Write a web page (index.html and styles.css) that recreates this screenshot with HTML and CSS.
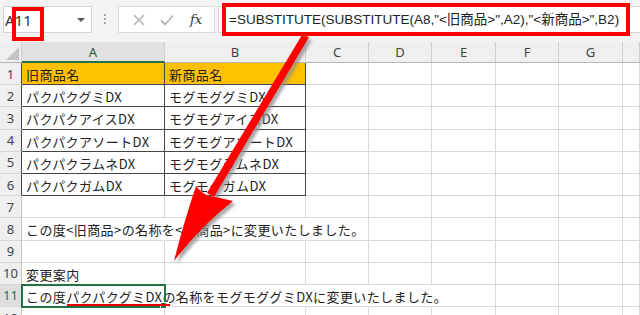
FILE: index.html
```html
<!DOCTYPE html>
<html>
  <head>
    <meta charset="UTF-8">
    <title>SUBSTITUTE</title>
    <link rel="stylesheet" href="styles.css">
  </head>
  <body>
    <div class="fbar">
      <div class="namebox"><span class="ref">A11</span><span class="dd"></span></div>
      <div class="grip"><i></i><i></i><i></i></div>
      <div class="fbtns">
        <svg width="12" height="12" viewBox="0 0 12 12"><path d="M1 1L11 11M11 1L1 11" stroke="#b4b4b4" stroke-width="1.6" fill="none"/></svg>
        <svg width="14" height="12" viewBox="0 0 14 12"><path d="M1 6.5L5 10.5L13 1.5" stroke="#b4b4b4" stroke-width="1.8" fill="none"/></svg>
        <span class="fx">fx</span>
      </div>
      <div class="finput">=SUBSTITUTE(SUBSTITUTE(A8,"&lt;旧商品&gt;",A2),"&lt;新商品&gt;",B2)</div>
    </div>

    <table class="sheet">
      <colgroup>
        <col style="width:22px"><col style="width:143px"><col style="width:141px">
        <col style="width:63px"><col style="width:63px"><col style="width:64px">
        <col style="width:63px"><col style="width:64px"><col>
      </colgroup>
      <tr class="hdr">
        <th class="corner"></th><th class="sel">A</th><th>B</th><th>C</th><th>D</th><th>E</th><th>F</th><th>G</th><th></th>
      </tr>
      <tr>
        <th class="rn dk">1</th><td class="d gold">旧商品名</td><td class="d gold">新商品名</td><td></td><td></td><td></td><td></td><td></td><td></td>
      </tr>
      <tr>
        <th class="rn dk">2</th><td class="d">パクパクグミDX</td><td class="d">モグモググミDX</td><td></td><td></td><td></td><td></td><td></td><td></td>
      </tr>
      <tr>
        <th class="rn dk">3</th><td class="d">パクパクアイスDX</td><td class="d">モグモグアイスDX</td><td></td><td></td><td></td><td></td><td></td><td></td>
      </tr>
      <tr>
        <th class="rn dk">4</th><td class="d">パクパクアソートDX</td><td class="d">モグモグアソートDX</td><td></td><td></td><td></td><td></td><td></td><td></td>
      </tr>
      <tr>
        <th class="rn dk">5</th><td class="d">パクパクラムネDX</td><td class="d">モグモグラムネDX</td><td></td><td></td><td></td><td></td><td></td><td></td>
      </tr>
      <tr>
        <th class="rn dk">6</th><td class="d">パクパクガムDX</td><td class="d">モグモグガムDX</td><td></td><td></td><td></td><td></td><td></td><td></td>
      </tr>
      <tr>
        <th class="rn">7</th><td></td><td></td><td></td><td></td><td></td><td></td><td></td><td></td>
      </tr>
      <tr>
        <th class="rn">8</th><td class="ov">この度&lt;旧商品&gt;の名称を&lt;新商品&gt;に変更いたしました。</td><td class="ov"></td><td></td><td></td><td></td><td></td><td></td><td></td>
      </tr>
      <tr>
        <th class="rn">9</th><td></td><td></td><td></td><td></td><td></td><td></td><td></td><td></td>
      </tr>
      <tr>
        <th class="rn">10</th><td>変更案内</td><td></td><td></td><td></td><td></td><td></td><td></td><td></td>
      </tr>
      <tr>
        <th class="rn sel">11</th><td class="active">この度<span class="mark">パクパクグミDX</span>の名称をモグモググミDXに変更いたしました。</td><td class="ov"></td><td class="ov"></td><td class="ov"></td><td></td><td></td><td></td><td></td>
      </tr>
      <tr>
        <th class="rn">12</th><td></td><td></td><td></td><td></td><td></td><td></td><td></td><td></td>
      </tr>
    </table>

    <div class="hl-name"></div>
    <div class="hl-formula"></div>

    <svg class="arrow" width="640" height="315" viewBox="0 0 640 315">
      <defs>
        <filter id="soft" x="-20%" y="-20%" width="140%" height="140%">
          <feGaussianBlur stdDeviation="1.5"/>
        </filter>
        <g id="arw">
          <path d="M302 35L309 37L214 197L207 193Z"/>
          <path d="M174 261Q183 225 196 186Q203 195 210 196Q221 198 233 201Q201 226 174 261Z"/>
        </g>
      </defs>
      <use href="#arw" x="3" y="3" fill="#8c8c8c" opacity="0.75" filter="url(#soft)"/>
      <use href="#arw" fill="#ff0000"/>
    </svg>
  </body>
</html>
```

FILE: styles.css
```css
html, body {
  margin: 0;
  padding: 0;
  width: 640px;
  height: 315px;
  overflow: hidden;
  background: #fff;
  font-family: "Noto Sans", "Noto Sans CJK JP", sans-serif;
}

/* formula bar */
.fbar {
  display: flex;
  align-items: flex-start;
  box-sizing: border-box;
  height: 42px;
  padding: 6px 0 0 3px;
  background: #f3f3f3;
}
.namebox {
  flex-shrink: 0;
  display: flex;
  align-items: center;
  justify-content: space-between;
  box-sizing: border-box;
  width: 89px;
  height: 27px;
  padding: 0 6px 0 0;
  background: #fff;
  border: 1px solid #d4d4d4;
  font-size: 15px;
  color: #333;
}
.namebox .ref { margin-left: 1px; }
.dd {
  width: 0;
  height: 0;
  border-left: 4px solid transparent;
  border-right: 4px solid transparent;
  border-top: 4px solid #555;
}
.grip {
  flex-shrink: 0;
  display: flex;
  flex-direction: column;
  gap: 2px;
  width: 26px;
  align-items: center;
  padding-top: 8px;
}
.grip i {
  display: block;
  width: 2px;
  height: 2px;
  background: #a8a8a8;
}
.fbtns {
  flex-shrink: 0;
  display: flex;
  align-items: center;
  justify-content: space-around;
  box-sizing: border-box;
  width: 97px;
  height: 27px;
  padding: 0 4px 0 6px;
  background: #fff;
  border: 1px solid #dcdcdc;
}
.fx {
  font-family: "DejaVu Serif", serif;
  font-style: italic;
  font-size: 13px;
  color: #333;
}
.finput {
  flex: 1;
  min-width: 0;
  overflow: hidden;
  box-sizing: border-box;
  height: 27px;
  margin-left: 3px;
  padding: 0 0 0 10px;
  background: #fff;
  border: 1px solid #d4d4d4;
  border-right: none;
  font-family: "Liberation Sans", "Noto Sans CJK JP", sans-serif;
  font-size: 13.5px;
  line-height: 26px;
  color: #222;
  white-space: nowrap;
}

/* sheet */
.sheet {
  table-layout: fixed;
  width: 640px;
  border-collapse: separate;
  border-spacing: 0;
  font-family: "Noto Sans CJK JP", sans-serif;
  font-size: 13px;
  color: #222;
}
.sheet tr { height: 22.2px; }
.sheet tr.hdr { height: 21px; }
.sheet th, .sheet td {
  box-sizing: border-box;
  padding: 0;
  border-right: 1px solid #d9d9d9;
  border-bottom: 1px solid #d9d9d9;
  white-space: nowrap;
  overflow: visible;
  font-weight: normal;
}
.sheet td {
  padding: 2px 0 0 4px;
  letter-spacing: 0.4px;
}
.hdr th {
  background: #efefef;
  border-right-color: #cfcfcf;
  border-bottom: 1px solid #b5b5b5;
  font-family: "Noto Sans", sans-serif;
  font-size: 13px;
  color: #444;
  text-align: center;
}
.hdr th.sel {
  background: #e1e1e1;
  border-bottom: 2px solid #217346;
  color: #2a5a3c;
}
.corner { position: relative; }
.corner::after {
  content: "";
  position: absolute;
  right: 2px;
  bottom: 2px;
  border-left: 13px solid transparent;
  border-bottom: 13px solid #c4c4c4;
}
.rn {
  background: #efefef;
  border-right-color: #c3c3c3 !important;
  border-bottom-color: #d6d6d6 !important;
  font-family: "Noto Sans", sans-serif;
  font-size: 13px;
  color: #444;
  text-align: center;
}
.rn.dk { border-right-color: #444 !important; }
.rn.sel {
  background: #dedede;
  color: #217346;
}

.d {
  border-right-color: #444 !important;
  border-bottom-color: #444 !important;
}
.gold { background: #ffc000; }
.ov { border-right-color: transparent !important; }

.active {
  position: relative;
  border-right-color: transparent !important;
  outline: 2px solid #217346;
  outline-offset: -1px;
}
.active::after {
  content: "";
  position: absolute;
  right: -3px;
  bottom: -3px;
  width: 5px;
  height: 5px;
  background: #217346;
  border: 1px solid #fff;
}
.mark { position: relative; }
.mark::after {
  content: "";
  position: absolute;
  z-index: 1;
  left: 1px;
  right: -8px;
  bottom: 0;
  height: 2px;
  background: #e60000;
}

/* annotations */
.hl-name {
  position: absolute;
  left: 12px;
  top: 7px;
  width: 32px;
  height: 34px;
  box-sizing: border-box;
  border: 4px solid #ff0000;
}
.hl-formula {
  position: absolute;
  left: 222px;
  top: 3px;
  width: 408px;
  height: 33px;
  box-sizing: border-box;
  border: 4px solid #ff0000;
}
.arrow {
  position: absolute;
  left: 0;
  top: 0;
  pointer-events: none;
}
```
